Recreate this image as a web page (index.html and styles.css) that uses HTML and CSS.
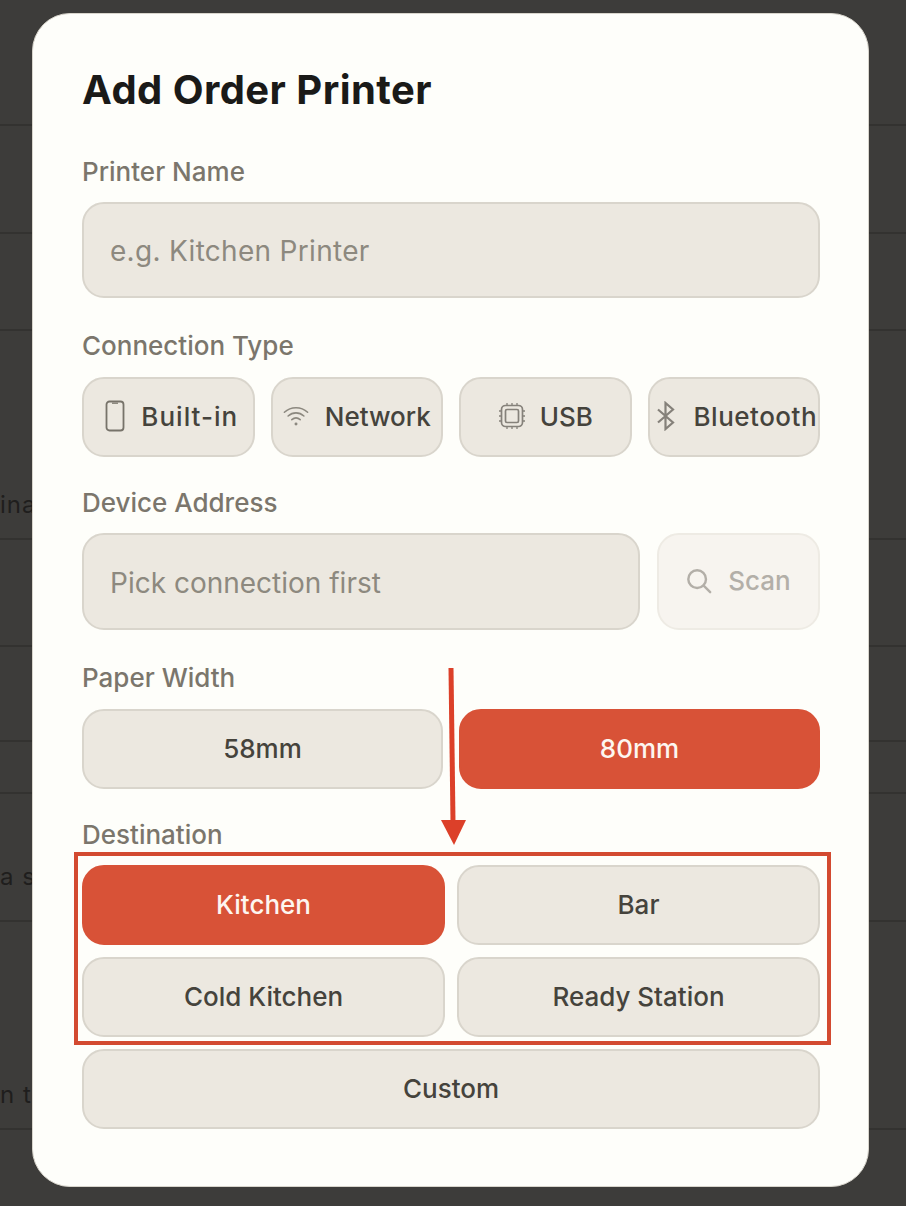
FILE: index.html
```html
<!doctype html>
<html lang="en">
<head>
  <meta charset="utf-8">
  <title>Add Order Printer</title>
  <link rel="stylesheet" href="styles.css">
</head>
<body>
  <div class="backdrop">
    <div class="row"></div>
    <div class="row"></div>
    <div class="row"></div>
    <div class="row"><span>ina</span></div>
    <div class="row"></div>
    <div class="row"></div>
    <div class="row"></div>
    <div class="row row-high"><span>a s</span></div>
    <div class="row"><span>n t</span></div>
  </div>

  <section class="modal">
    <h1>Add Order Printer</h1>

    <div class="field field-first">
      <label>Printer Name</label>
      <div class="input input-name">e.g. Kitchen Printer</div>
    </div>

    <div class="field">
      <label>Connection Type</label>
      <div class="chips">
        <button class="btn chip chip-first">
          <svg width="20" height="32" viewBox="0 0 20 32" fill="none" stroke="#77736a" stroke-width="1.8"><rect x="1.5" y="1.5" width="17" height="29" rx="3"/><path d="M7 3.2h6" stroke-width="1.2"/></svg>
          <span class="chip-gap chip-builtin">Built-in</span>
        </button>
        <button class="btn chip">
          <svg width="26" height="24" viewBox="0 0 28 24" fill="none" stroke="#8c887f" stroke-width="1.7" stroke-linecap="round"><path d="M1.5 8C8.500 1.500 19.500 1.500 26.500 8"/><path d="M5.500 12C10.500 7.500 17.500 7.500 22.500 12"/><path d="M9.500 16C12.300 13.600 15.700 13.600 18.500 16"/><circle cx="14" cy="20.500" r="1.600" fill="#8c887f" stroke="none"/></svg>
          <span class="chip-gap">Network</span>
        </button>
        <button class="btn chip">
          <svg width="28" height="28" viewBox="0 0 28 28" fill="none" stroke="#85817a" stroke-width="1.700"><rect x="3.500" y="3.500" width="21" height="21" rx="4"/><rect x="7.500" y="7.500" width="13" height="13" rx="1.500"/><path d="M9 1v2.500M14 1v2.500M19 1v2.500M9 24.500V27M14 24.500V27M19 24.500V27M1 9h2.500M1 14h2.500M1 19h2.500M24.500 9H27M24.500 14H27M24.500 19H27" stroke-width="1.300"/></svg>
          <span class="chip-gap chip-usb">USB</span>
        </button>
        <button class="btn chip chip-tight">
          <svg width="20" height="30" viewBox="0 0 20 30" fill="none" stroke="#85817a" stroke-width="2.200"><path d="M2 8.500 17 21.500 9.500 28V2L17 8.500 2 21.500"/></svg>
          <span class="chip-gap-wide">Bluetooth</span>
        </button>
      </div>
    </div>

    <div class="field field-after-btn">
      <label>Device Address</label>
      <div class="address">
        <div class="input">Pick connection first</div>
        <button class="btn scan">
          <svg width="26" height="26" viewBox="0 0 28 28" fill="none" stroke="#b3afa8" stroke-width="2.600" stroke-linecap="round"><circle cx="12" cy="12" r="9.500"/><path d="M19 19l7 7"/></svg>
          <span class="chip-gap">Scan</span>
        </button>
      </div>
    </div>

    <div class="field">
      <label>Paper Width</label>
      <div class="split">
        <button class="btn">58mm</button>
        <button class="btn active">80mm</button>
      </div>
    </div>

    <div class="field field-after-btn">
      <label>Destination</label>
      <div class="dest">
        <button class="btn active">Kitchen</button>
        <button class="btn">Bar</button>
        <button class="btn">Cold Kitchen</button>
        <button class="btn">Ready Station</button>
        <button class="btn wide">Custom</button>
      </div>
    </div>
  </section>

  <!-- red markup drawn on top of the shot -->
  <div class="mark-box"></div>
  <svg class="mark-arrow" width="30" height="180" viewBox="0 0 30 180">
    <path d="M13 0l2 154" stroke="#dc4029" stroke-width="5" fill="none"/>
    <path d="M3 152h25l-12 25z" fill="#dc4029"/>
  </svg>
</body>
</html>
```

FILE: styles.css
```css
:root {
  --bg: #3d3c3a;
  --line: #333230;
  --card: #fefefa;
  --field: #ece8e0;
  --field-line: #d9d5cc;
  --muted: #7b766c;
  --accent: #d85237;
  --gap: 16px;
}
*, *::before, *::after { box-sizing: border-box; }
html, body { height: 100%; }
body {
  margin: 0;
  height: 1206px;
  overflow: hidden;
  position: relative;
  background: var(--bg);
  font-family: Inter, "Noto Sans", sans-serif;
}

/* ── page behind the dialog ───────────────────────────── */
.backdrop {
  display: grid;
  grid-template-rows: 126px 108px 97px 209px 107px 95px 52px 128px 208px;
}
.row {
  display: flex;
  align-items: flex-end;
  padding-bottom: 18px;
  border-bottom: 2px solid var(--line);
  color: #1f1e1d;
  font-size: 24px;
  line-height: 30px;
  letter-spacing: 1px;
}
.row-high { padding-bottom: 28px; }

/* ── dialog ───────────────────────────────────────────── */
.modal {
  position: absolute;
  top: 13px;
  left: 32px;
  width: 837px;
  height: 1174px;
  padding: 53px 48px 0 49px;
  background: var(--card);
  border: 1px solid #d8d5cc;
  border-radius: 38px;
}
h1 {
  margin: 0;
  color: #1a1a18;
  font-size: 40px;
  line-height: 46px;
  font-weight: 700;
  letter-spacing: .45px;
}
.field { margin-top: 33px; }
.field-first { margin-top: 44px; }
.field-after-btn { margin-top: 31px; }
label {
  display: block;
  margin-bottom: 15px;
  color: var(--muted);
  font-size: 26px;
  line-height: 30px;
  font-weight: 500;
}
.input {
  display: flex;
  align-items: center;
  height: 97px;
  padding: 2px 26px 0;
  background: var(--field);
  border: 2px solid var(--field-line);
  border-radius: 22px;
  color: #8d897f;
  font-size: 28px;
}
.input-name { height: 96px; letter-spacing: .3px; }
.btn {
  display: flex;
  align-items: center;
  justify-content: center;
  height: 80px;
  padding: 0 0 2px;
  background: var(--field);
  border: 2px solid var(--field-line);
  border-radius: 22px;
  color: #45433c;
  font-family: inherit;
  font-size: 26px;
  font-weight: 500;
}
.btn.active {
  background: var(--accent);
  border-color: var(--accent);
  color: #fdf6f0;
}
.chips {
  display: grid;
  grid-template-columns: repeat(4, 1fr);
  gap: var(--gap);
  margin-top: 16px;
}
.chip { white-space: nowrap; }
.chip-first { padding-left: 7px; }
.chip-gap { margin-left: 16px; }
.chip-usb { margin-left: 14px; }
.chip-builtin { letter-spacing: 1px; }
.chip-gap-wide { margin-left: 18px; letter-spacing: .5px; }
.chip-tight { justify-content: flex-start; padding-left: 6px; }
.address { display: flex; gap: 17px; }
.address .input { flex: 1; }
.scan {
  width: 163px;
  height: 97px;
  background: #f7f4ef;
  border-color: #eeebe4;
  color: #b3afa8;
}
.split {
  display: grid;
  grid-template-columns: 1fr 1fr;
  gap: var(--gap);
  margin-top: 16px;
}
.dest {
  display: grid;
  grid-template-columns: 1fr 1fr;
  gap: 12px;
}
.wide { grid-column: 1 / -1; }

/* ── red annotation ───────────────────────────────────── */
.mark-box {
  position: absolute;
  top: 852px;
  left: 74px;
  width: 757px;
  height: 193px;
  border: 4px solid #d34a30;
}
.mark-arrow {
  position: absolute;
  top: 668px;
  left: 438px;
}
```
